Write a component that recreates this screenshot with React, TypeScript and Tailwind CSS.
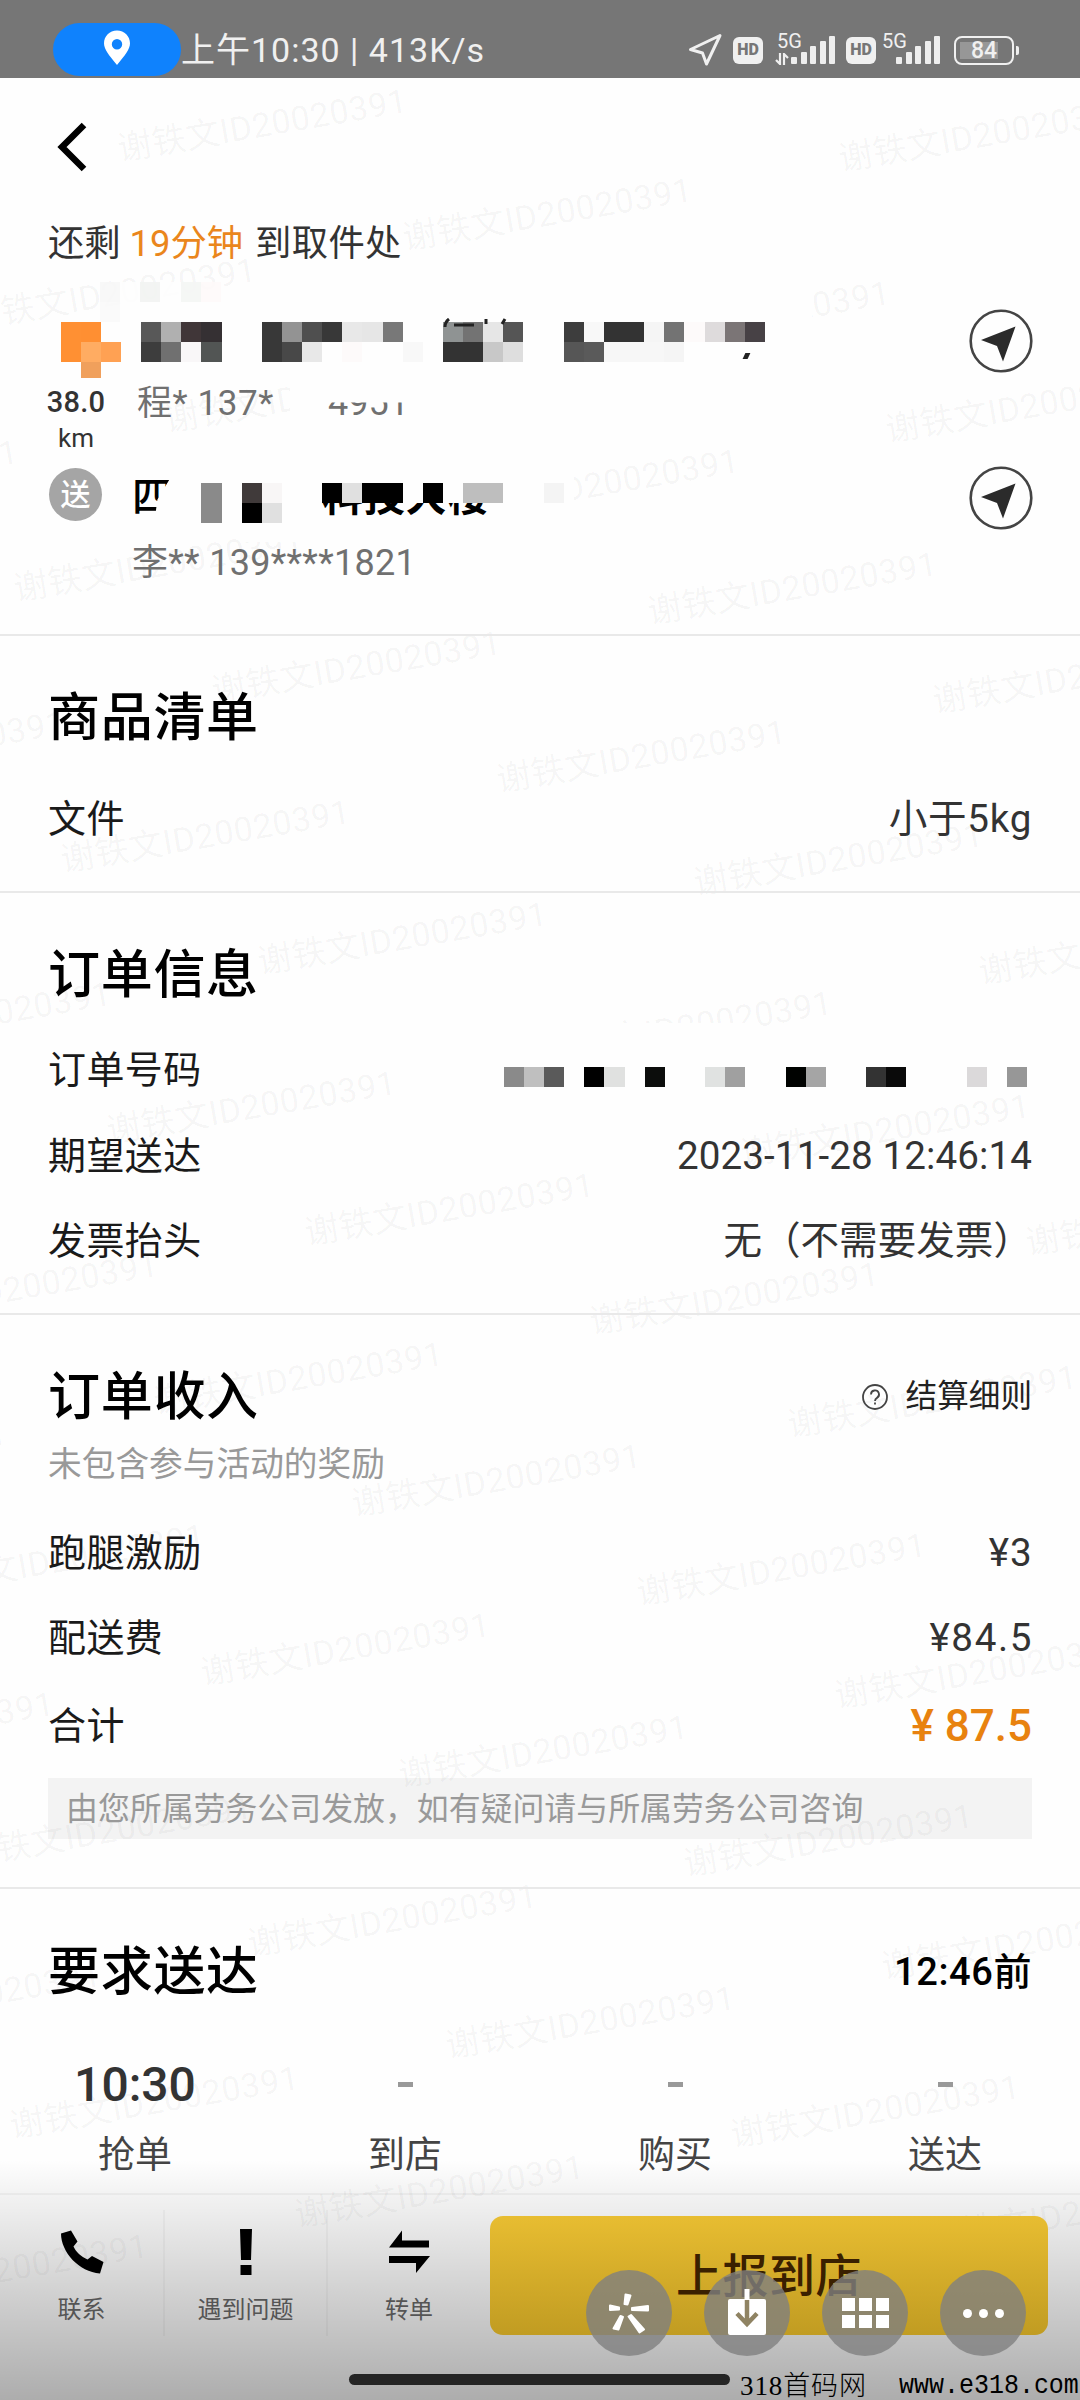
import React from "react";

/* ---------- Watermark layer ---------- */

const marks: { x: number; y: number }[] = [];
for (let i = -4; i <= 4; i++) {
  for (let j = -4; j <= 10; j++) {
    const x = 118 + i * 436 + j * 46.8;
    const y = 149 - i * 79.5 + j * 271;
    marks.push({ x, y }, { x: x + 285, y: y + 89 });
  }
}

function Watermarks() {
  return (
    <div className="pointer-events-none absolute inset-0 overflow-hidden">
      {marks
        .filter((m) => m.x > -290 && m.x < 1030 && m.y > 90 && m.y < 2380)
        .map((m, k) => (
          <span
            key={k}
            className="absolute origin-left -translate-y-1/2 -rotate-[9.6deg] text-[34px] leading-none tracking-[0.5px] whitespace-nowrap text-black/[0.045]"
            style={{ left: m.x, top: m.y }}
          >
            谢铁文ID20020391
          </span>
        ))}
    </div>
  );
}

/* ---------- Pixelated (censored) blocks ---------- */

function Mosaic({ rows, className = "" }: { rows: string[][]; className?: string }) {
  return (
    <div className={"flex flex-col " + className}>
      {rows.map((r, i) => (
        <div key={i} className="flex h-[20.1px]">
          {r.map((c, j) => (
            <div key={j} className="h-full w-[20.14px] shrink-0" style={{ background: c || "#fefefe" }} />
          ))}
        </div>
      ))}
    </div>
  );
}

const W = "";
const pickupRows = [
  ["#585858", "#b0b0b0", "#403638", "#353033", W, W, "#383838", "#939393", "#4f4f4f", "#383838", "#e8e8e8", "#e6e6e6", "#787878", W, W, "#8f9393", "#737373", "#e6e6e6", "#555555", W, W, "#3d3d3d", "#f8f8f8", "#333333", "#333333", "#f5f5f5", "#737373", "#fdfafa", "#dedbdc", "#7b7576", "#474145"],
  ["#3d3d3d", "#707070", "#f9f7f8", "#525554", W, W, "#383838", "#484848", "#e8e8e8", W, "#fdfafa", W, W, "#f8f8f8", W, "#333333", "#333333", "#c8c8c8", "#dedede", W, W, "#565656", "#5a5a5a", "#f7f7f7", "#f7f7f7", "#f7f7f7", "#f5f5f5", W, W, W, W],
];
const dropRows = [
  ["#8a8a8a", W, "#403a3a", "#f8f6f6", W, W, "#000000", "#e0e0e0", "#000000", "#000000", W, "#000000", W, "#bebebe", "#bebebe", W],
  ["#8a8a8a", W, "#000000", "#e0e0e0", W, W],
];
const orderRow = [
  ["#8a8a8a", "#bfbfbf", "#5a5a5a", W, "#000000", "#e0e1e0", W, "#0c0d0c", W, W, "#e0e2e1", "#a0a0a0", W, W, "#000200", "#a5a5a5", W, W, "#333333", "#0a0a0a", W, W, W, "#dbd9da", W, "#979797"],
];

/* ---------- Status bar ---------- */

function Bars() {
  return (
    <div className="flex h-[28px] items-end gap-[3.4px]">
      <i className="h-[7px] w-[6px] rounded-[1px] bg-[#eee]" />
      <i className="h-[12px] w-[6px] rounded-[1px] bg-[#eee]" />
      <i className="h-[18px] w-[6px] rounded-[1px] bg-[#eee]" />
      <i className="h-[23px] w-[6px] rounded-[1px] bg-[#eee]" />
      <i className="h-[28px] w-[6px] rounded-[1px] bg-[#eee]" />
    </div>
  );
}

function Hd() {
  return (
    <div className="flex h-[27px] w-[30px] items-center justify-center rounded-[6px] bg-[#f0f0f0] text-[16px] leading-none font-black text-[#767676]">
      HD
    </div>
  );
}

function StatusBar() {
  return (
    <div className="relative flex h-[78px] items-start bg-[#767676] text-[#f0f0f0]">
      <div className="mt-[23px] ml-[53px] flex h-[53px] w-[128px] items-center justify-center rounded-full bg-[#0f82fd]">
        <svg width="28" height="36" viewBox="0 0 28 36" className="-mt-[4px]">
          <path fillRule="evenodd" fill="#fff" d="M14 0.5C6.5 0.5 1 6.2 1 13.3c0 6 5 12 13 21.7 8-9.700 13-15.700 13-21.700C27 6.200 21.500 0.500 14 0.500zM14 9a5.200 5.200 0 1 1 0 10.400A5.200 5.200 0 0 1 14 9z" />
        </svg>
      </div>
      <div className="mt-[30px] text-[34px] leading-[40px] tracking-[1px] whitespace-nowrap">上午10:30 | 413K/s</div>
      <div className="absolute top-0 left-[688px] flex h-[100px] items-center">
        <svg width="35" height="34" viewBox="0 0 35 34" fill="none" stroke="#f0f0f0" strokeWidth="3" strokeLinejoin="round">
          <path d="M32 2.500 2.500 16.500 14.500 20 18.500 31z" />
        </svg>
        <div className="ml-[10px]"><Hd /></div>
        <div className="relative ml-[12px] flex h-[34px] w-[60px] items-end justify-end pb-[3px]">
          <span className="absolute -top-[1px] left-[2px] text-[20px] leading-[18px]">5G</span>
          <svg width="14" height="12" viewBox="0 0 14 12" className="absolute bottom-[2px] left-0" fill="none" stroke="#f0f0f0" strokeWidth="2.200">
            <path d="M5 0v11L1 7M9 12V1l4 4" />
          </svg>
          <Bars />
        </div>
        <div className="ml-[11px]"><Hd /></div>
        <div className="relative ml-[6px] flex h-[34px] w-[58px] items-end justify-end pb-[3px]">
          <span className="absolute -top-[1px] left-0 text-[20px] leading-[18px]">5G</span>
          <Bars />
        </div>
        <div className="relative ml-[14px] flex h-[29px] w-[60px] items-center rounded-[8px] border-[2.500px] border-[#f0f0f0] p-[4px]">
          <div className="h-full w-[38px] bg-[#979797]" />
          <span className="absolute inset-0 flex items-center justify-center text-[23px] leading-none font-medium">84</span>
          <i className="absolute -right-[7px] h-[9px] w-[3.500px] rounded-r-[2px] bg-[#eee]" />
        </div>
      </div>
    </div>
  );
}

/* ---------- Pieces ---------- */

function NavButton() {
  return (
    <svg width="64" height="64" viewBox="0 0 64 64" className="shrink-0">
      <circle cx="32" cy="32" r="30.300" fill="none" stroke="#444" strokeWidth="2.600" />
      <path d="M46.500 17.500 12 31l16 6 6 15.500z" fill="#2b2b2b" />
    </svg>
  );
}

function Row({ label, value, className }: { label: string; value: React.ReactNode; className: string }) {
  return (
    <div className={"flex items-center justify-between text-[38px] leading-none " + className}>
      <span className="tracking-[0.4px] text-[#1a1a1a]">{label}</span>
      <span className="text-[38.6px] text-[#333]">{value}</span>
    </div>
  );
}

function Title({ children }: { children: React.ReactNode }) {
  return <h2 className="pt-[2px] text-[52px] leading-[50px] font-medium tracking-[0.700px] text-black">{children}</h2>;
}

function Stage({ top, label }: { top: React.ReactNode; label: string }) {
  return (
    <div className="flex w-[270px] flex-col items-center">
      <div className="flex h-[48px] items-center">{top}</div>
      <div className="mt-[24px] text-[37px] leading-[48px] text-[#444]">{label}</div>
    </div>
  );
}

const Dash = () => <div className="h-[5px] w-[15px] bg-[#999]" />;

function Action({ icon, label, className }: { icon: React.ReactNode; label: string; className: string }) {
  return (
    <div className={"flex h-[126px] shrink-0 flex-col items-center pt-[20px] " + className}>
      <div className="flex h-[44px] items-center">{icon}</div>
      <div className="mt-[18px] text-[24px] leading-[36px] whitespace-nowrap text-[#555]">{label}</div>
    </div>
  );
}

function Bubble({ children }: { children: React.ReactNode }) {
  return <div className="flex h-[86px] w-[86px] items-center justify-center rounded-full bg-[#808080]/80">{children}</div>;
}

/* ---------- Page ---------- */

export default function App() {
  return (
    <div className="relative h-[2400px] w-[1080px] overflow-hidden bg-[#fefefe] font-['Roboto','Noto_Sans_CJK_SC',sans-serif]">
      <Watermarks />
      <StatusBar />

      <div className="relative">
        <header className="flex h-[138px] items-center pl-[57px]">
          <svg width="30" height="50" viewBox="0 0 30 50" fill="none" stroke="#000" strokeWidth="6.500">
            <path d="M27 3 5 25 27 47" />
          </svg>
        </header>

        <div className="flex h-[54px] items-center pt-[2px] pl-[48px] text-[36.300px] leading-none whitespace-pre text-[#333]">
          <span>还剩</span>
          <span className="ml-[9px] text-[#ea861c]">19分钟</span>
          <span className="ml-[12px] tracking-[0.4px]">到取件处</span>
        </div>

        {/* pickup */}
        <div className="relative flex h-[188px] items-start pl-[38px]">
          <div className="absolute top-[4px] left-[560px] h-[92px] w-[252px] bg-[#fefefe]" />
          <div className="absolute top-[84px] left-[290px] h-[60px] w-[200px] bg-[#fefefe]" />
          <Mosaic className="absolute top-[12px] left-[100px] opacity-90" rows={[["#f8f8f8", W, "#f2f4f2", W, "#f5f7f5", "#fefafa"], ["#fafafa", W, W, W, W, W]]} />
          <div className="relative flex w-[76px] flex-col items-center pt-[52px]">
            <div className="-mr-[8px] h-[56px] w-[61px] self-end">
              <Mosaic rows={[["#ff9033", "#ff8f32", W], ["#ff9033", "#ffac62", "#ffa153"]]} />
              <div className="ml-[20.14px] h-[16px] w-[20.14px] bg-[#f0a05c]" />
            </div>
            <span className="mt-[7px] text-[29px] leading-[34px] font-medium tracking-[0.200px] text-[#333]">38.0</span>
            <span className="mt-[2px] text-[26px] leading-[34px] text-[#333]">km</span>
          </div>
          <div className="relative ml-[27px] flex w-[630px] flex-col pt-[52.300px]">
            <Mosaic rows={pickupRows} />
            <svg width="64" height="10" viewBox="0 0 64 10" className="absolute top-[48px] left-[302px]" fill="none" stroke="#222" strokeWidth="3">
              <path d="M6 1Q2 4 2 9M11 7H31M43 1V6M62 1 59 6" />
            </svg>
            <i className="absolute top-[83px] left-[603px] h-[6px] w-[5px] -skew-x-[25deg] bg-[#222]" />
            <div className="relative mt-[19px] flex h-[44px] items-center text-[36px] leading-none whitespace-pre text-[#707070]">
              <span className="-ml-[4px] text-[35px] tracking-[0.600px]">程* 137*</span>
              <span className="absolute left-[187px] [clip-path:inset(17px_0_0_0)]">4951</span>
            </div>
          </div>
          <div className="absolute top-[38.500px] left-[969px]"><NavButton /></div>
        </div>

        {/* drop-off */}
        <div className="relative flex h-[176px] items-start pl-[49px]">
          <div className="absolute top-0 left-[240px] h-[84px] w-[334px] bg-[#fefefe]" />
          <div className="absolute top-[25px] left-[544px] h-[20px] w-[20px] bg-[#f4f4f4]" />
          <div className="relative mt-[10px] flex h-[53px] w-[53px] items-center justify-center rounded-full bg-[#a5a5a5] text-[30px] leading-none font-medium text-white">
            送
          </div>
          <div className="relative ml-[30px] flex flex-col">
            <div className="relative mt-[14px] h-[56px]">
              <span className="absolute top-[5px] left-0 text-[41px] leading-none font-medium text-black [clip-path:polygon(0_0,95%_0,62%_55%,56%_100%,0_100%)]">四</span>
              <Mosaic className="absolute top-[11.300px] left-[69.400px]" rows={dropRows} />
              <div className="absolute top-[31px] left-[190px] h-[16px] overflow-hidden">
                <div className="-mt-[26px] text-[41px] leading-[41px] font-bold tracking-[0.8px] whitespace-nowrap text-black">科技大楼</div>
              </div>
            </div>
            <div className="mt-[13px] flex h-[44px] items-center text-[36px] leading-none tracking-[0.300px] whitespace-pre text-[#707070]">李** 139****1821</div>
          </div>
          <div className="absolute top-[7.500px] left-[969px]"><NavButton /></div>
        </div>

        {/* goods */}
        <section className="h-[257px] border-t-2 border-[#e9e9e9] px-[48px] pt-[56px]">
          <Title>商品清单</Title>
          <div className="pt-[48px]">
            <Row className="h-[54px]" label="文件" value={<span className="tracking-[0.7px]">小于5kg</span>} />
          </div>
        </section>

        {/* order info */}
        <section className="relative h-[422px] border-t-2 border-[#e9e9e9] px-[48px] pt-[56px]">
          <div className="absolute top-[130px] left-[520px] h-[50px] w-[240px] bg-[#fefefe]" />
          <Title>订单信息</Title>
          <div className="relative pt-[26px]">
            <Row className="h-[86px]" label="订单号码" value={<Mosaic className="mr-[5px] mt-[14px]" rows={orderRow} />} />
            <Row className="h-[86px]" label="期望送达" value={<span className="tracking-[0.100px]">2023-11-28 12:46:14</span>} />
            <Row className="h-[84px]" label="发票抬头" value="无（不需要发票）" />
          </div>
        </section>

        {/* income */}
        <section className="h-[574px] border-t-2 border-[#e9e9e9] px-[48px] pt-[56px]">
          <div className="flex items-center justify-between">
            <Title>订单收入</Title>
            <div className="flex items-center text-[31.600px] leading-none text-[#222]">
              <svg width="28" height="28" viewBox="0 0 28 28" fill="none" stroke="#444" strokeWidth="1.800">
                <circle cx="14" cy="14" r="12" />
                <path d="M10 11.500a4 4 0 1 1 6 3.400c-1.500 0.900-2 1.500-2 3M14 19.500v2" />
              </svg>
              <span className="ml-[17px]">结算细则</span>
            </div>
          </div>
          <div className="mt-[19px] text-[33.700px] leading-[46px] text-[#999]">未包含参与活动的奖励</div>
          <div className="pt-[22px]">
            <Row className="h-[86px]" label="跑腿激励" value={<span className="-mr-[1px] tracking-[1.2px]">¥3</span>} />
            <Row className="h-[84px]" label="配送费" value={<span className="-mr-[1px] tracking-[1.6px]">¥84.5</span>} />
            <Row className="h-[92px]" label="合计" value={<span className="text-[44px] font-medium text-[#e8820f]">¥ 87.5</span>} />
          </div>
          <div className="mt-[6px] flex h-[61px] items-center bg-black/[0.045] pl-[18px] text-[31.900px] leading-none whitespace-nowrap text-[#999]">
            <span className="pt-[2px]">由您所属劳务公司发放，如有疑问请与所属劳务公司咨询</span>
          </div>
        </section>

        {/* delivery */}
        <section className="h-[306px] border-t-2 border-[#e9e9e9] pt-[57px]">
          <div className="flex items-center justify-between px-[48px]">
            <Title>要求送达</Title>
            <span className="text-[38px] leading-none font-medium tracking-[0.6px] text-black">12:46前</span>
          </div>
          <div className="mt-[62px] flex">
            <Stage top={<span className="pt-[2px] text-[48px] leading-none font-medium text-[#333]">10:30</span>} label="抢单" />
            <Stage top={<Dash />} label="到店" />
            <Stage top={<Dash />} label="购买" />
            <Stage top={<Dash />} label="送达" />
          </div>
        </section>

        {/* bottom bar */}
        <footer className="relative h-[207px]">
          <div className="absolute inset-x-0 -top-[33px] bottom-0 bg-gradient-to-b from-black/0 to-black/[0.32]" />
          <div className="relative flex items-start border-t-2 border-black/[0.04] pt-[15px]">
            <Action
              className="w-[163px]"
              label="联系"
              icon={
                <svg width="44" height="44" viewBox="0 0 44 44" fill="#000">
                  <path d="M1 3.500 11 0.500 17.500 11.500 13.500 16.500C16 22 21 26.500 27.500 29.500L32 26 43.500 32 40 43.500C19 42 1 22 1 3.500z" />
                </svg>
              }
            />
            <Action
              className="w-[165px] border-x-2 border-black/[0.03]"
              label="遇到问题"
              icon={
                <svg width="14" height="46" viewBox="0 0 14 46" fill="#000">
                  <path d="M1 0h12l-1 31H2zM1.500 36h11v10h-11z" />
                </svg>
              }
            />
            <Action
              className="w-[162px]"
              label="转单"
              icon={
                <svg width="43" height="44" viewBox="0 0 43 44" fill="#000">
                  <path d="M14 0.500V10.500H41V17.500H1zM1 26H42L28 43V33H1z" />
                </svg>
              }
            />
            <div className="mt-[6px] flex h-[119px] w-[558px] items-center justify-center rounded-[13px] bg-gradient-to-b from-[#e8bd31] to-[#c19c22] text-[46px] leading-none font-medium tracking-[0.500px] text-[#3a2000]">
              上报到店
            </div>
          </div>
          <div className="absolute top-[77px] left-[586px] flex gap-[32px]">
            <Bubble>
              <svg width="42" height="44" viewBox="0 0 42 44" fill="#fff" stroke="#fff" strokeLinejoin="round" strokeWidth="2">
                <path d="M17.500 3.500 22.500 4.500 19.500 13.500 16.500 13zM2 14.500 11 16.500V18.500L2 19zM24 17 40 15V19.500L24 19zM20.500 25.500 23 24 36 38.500 31.500 41.500zM12.500 25 15 26 10.500 38.500 5.500 37.500z" />
              </svg>
            </Bubble>
            <Bubble>
              <svg width="38" height="46" viewBox="0 0 38 46" className="-mt-[2px]">
                <rect x="0" y="10" width="38" height="36" rx="2" fill="#fff" />
                <path d="M19 0V12" stroke="#fff" strokeWidth="5" />
                <path d="M19 11V35M9 24.500 19 35 29 24.500" fill="none" stroke="#8f8363" strokeWidth="4.500" />
              </svg>
            </Bubble>
            <Bubble>
              <div className="grid grid-cols-3 gap-[4px]">
                {[0, 1, 2, 3, 4, 5].map((n) => (
                  <i key={n} className="h-[13px] w-[13px] bg-white" />
                ))}
              </div>
            </Bubble>
            <Bubble>
              <div className="flex gap-[7px]">
                <i className="h-[9px] w-[9px] rounded-full bg-white" />
                <i className="h-[9px] w-[9px] rounded-full bg-white" />
                <i className="h-[9px] w-[9px] rounded-full bg-white" />
              </div>
            </Bubble>
          </div>
          <div className="absolute top-[181px] left-[349px] h-[11px] w-[381px] rounded-full bg-[#252525]" />
          <div className="absolute top-[178px] left-[740px] text-[27px] leading-[30px] whitespace-pre text-black">
            <span className="font-['Liberation_Serif','Noto_Sans_CJK_SC',serif] font-light tracking-[0.900px]">318首码网</span>
          </div>
          <div className="absolute top-[178px] left-[899px] origin-left scale-x-[0.925] font-['Liberation_Mono',monospace] text-[27px] leading-[30px] text-black">
            www.e318.com
          </div>
        </footer>
      </div>
    </div>
  );
}
